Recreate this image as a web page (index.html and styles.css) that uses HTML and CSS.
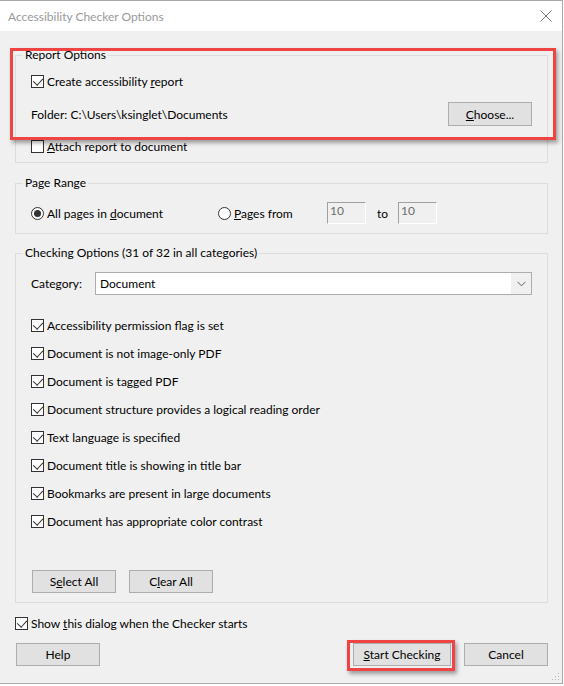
FILE: index.html
```html
<!DOCTYPE html>
<html lang="en">

<head>
    <meta charset="UTF-8">
    <meta name="viewport" content="width=device-width, initial-scale=1.0">
    <title>Accessibility Checker Options</title>
    <link rel="stylesheet" href="styles.css">
</head>

<body>
    <div class="dialog">
        <div class="titlebar">
            <span class="title">Accessibility Checker Options</span>
            <svg class="close" width="12" height="12" viewBox="0 0 12 12">
                <path d="M0.5 0.5 L11.5 11.5 M11.5 0.5 L0.5 11.5" stroke="#7a7a7a" stroke-width="1" fill="none" />
            </svg>
        </div>

        <div class="content">
            <fieldset class="group report">
                <legend>Report Options</legend>
                <label class="check"><span class="box on"></span><span>Create accessibility <u>r</u>eport</span></label>
                <div class="folder-row">
                    <span>Folder: C:\Users\ksinglet\Documents</span>
                    <button class="btn"><u>C</u>hoose...</button>
                </div>
                <label class="check"><span class="box"></span><span><u>A</u>ttach report to document</span></label>
                <div class="callout callout-report"></div>
            </fieldset>

            <fieldset class="group range">
                <legend>Page Range</legend>
                <div class="range-row">
                    <label class="radio all"><span class="dot on"></span><span>All pages in <u>d</u>ocument</span></label>
                    <label class="radio from"><span class="dot"></span><span><u>P</u>ages from</span></label>
                    <span class="field">10</span>
                    <span class="to">to</span>
                    <span class="field">10</span>
                </div>
            </fieldset>

            <fieldset class="group checking">
                <legend>Checking Options (31 of 32 in all categories)</legend>
                <div class="category-row">
                    <span class="category-label">Cate<u>g</u>ory:</span>
                    <div class="select">
                        <span>Document</span>
                        <span class="arrow">
                            <svg width="9" height="6" viewBox="0 0 9 6">
                                <path d="M0.5 0.8 L4.5 4.8 L8.5 0.8" stroke="#606060" stroke-width="1" fill="none" />
                            </svg>
                        </span>
                    </div>
                </div>
                <div class="rules">
                    <label class="check"><span class="box on"></span><span>Accessibility permission flag is set</span></label>
                    <label class="check"><span class="box on"></span><span>Document is not image-only PDF</span></label>
                    <label class="check"><span class="box on"></span><span>Document is tagged PDF</span></label>
                    <label class="check"><span class="box on"></span><span>Document structure provides a logical reading order</span></label>
                    <label class="check"><span class="box on"></span><span>Text language is specified</span></label>
                    <label class="check"><span class="box on"></span><span>Document title is showing in title bar</span></label>
                    <label class="check"><span class="box on"></span><span>Bookmarks are present in large documents</span></label>
                    <label class="check"><span class="box on"></span><span>Document has appropriate color contrast</span></label>
                </div>
                <div class="select-buttons">
                    <button class="btn">S<u>e</u>lect All</button>
                    <button class="btn">C<u>l</u>ear All</button>
                </div>
            </fieldset>

            <label class="check show"><span class="box on"></span><span>Show <u>t</u>his dialog when the Checker starts</span></label>

            <div class="footer">
                <button class="btn">Help</button>
                <div class="footer-right">
                    <button class="btn start"><u>S</u>tart Checking
                        <span class="callout callout-start"></span>
                    </button>
                    <button class="btn">Cancel</button>
                </div>
            </div>
        </div>

        <svg class="grip" width="8" height="8" viewBox="0 0 8 8">
            <rect x="6" y="0" width="1" height="1" fill="#b8b8b8" />
            <rect x="3" y="3" width="1" height="1" fill="#b8b8b8" />
            <rect x="6" y="3" width="1" height="1" fill="#b8b8b8" />
            <rect x="0" y="6" width="1" height="1" fill="#b8b8b8" />
            <rect x="3" y="6" width="1" height="1" fill="#b8b8b8" />
            <rect x="6" y="6" width="1" height="1" fill="#b8b8b8" />
        </svg>
    </div>
</body>

</html>
```

FILE: styles.css
```css
* {
    margin: 0;
    padding: 0;
    box-sizing: border-box;
}

body {
    width: 564px;
    height: 686px;
    background: #fff;
    font-family: Lato, "Noto Sans", sans-serif;
    font-size: 12px;
    color: #000;
}

.dialog {
    position: relative;
    width: 563px;
    height: 684px;
    background: #f0f0f0;
    border-top: 1px solid #a8a8a8;
    border-right: 1px solid #a8a8a8;
    border-bottom: 1px solid #a8a8a8;
}

.titlebar {
    height: 30px;
    background: #fff;
    display: flex;
    align-items: center;
    justify-content: space-between;
    padding: 0 10px 0 8px;
}

.title {
    color: #9a9a9a;
    font-size: 12px;
}

.content {
    padding: 16px 14px 0 15px;
}

/* group boxes */
.group {
    position: relative;
    border: 1px solid #dcdcdc;
    padding: 0 15px;
}

.group legend {
    margin-left: -8px;
    padding: 0 2px;
    line-height: 16px;
}

.report {
    display: flex;
    flex-direction: column;
    gap: 10px;
    padding-top: 8px;
    padding-bottom: 6px;
}

.report .folder-row {
    margin-top: 1px;
}

.range {
    margin-top: 12px;
    padding-top: 11px;
    padding-bottom: 9px;
}

.checking {
    margin-top: 11px;
    padding-top: 11px;
    padding-bottom: 9px;
}

/* checkboxes and radios */
.check,
.radio {
    display: flex;
    align-items: center;
    height: 20px;
    white-space: nowrap;
}

.box {
    width: 13px;
    height: 13px;
    border: 1px solid #333;
    background: #fff;
    margin-right: 3px;
    position: relative;
    flex: none;
}

.box.on::after {
    content: "";
    position: absolute;
    left: 3px;
    top: 0;
    width: 5px;
    height: 8px;
    border-right: 1px solid #333;
    border-bottom: 1px solid #333;
    transform: rotate(42deg);
}

.dot {
    width: 13px;
    height: 13px;
    border: 1px solid #333;
    border-radius: 50%;
    background: #fff;
    margin-right: 3px;
    position: relative;
    flex: none;
}

.dot.on::after {
    content: "";
    position: absolute;
    left: 2px;
    top: 2px;
    width: 7px;
    height: 7px;
    border-radius: 50%;
    background: #333;
}

.folder-row {
    display: flex;
    align-items: center;
    justify-content: space-between;
    height: 24px;
}

.btn {
    width: 84px;
    height: 23px;
    background: #e1e1e1;
    border: 1px solid #adadad;
    font-family: inherit;
    font-size: 12px;
    color: #000;
    position: relative;
}

.folder-row .btn {
    height: 24px;
}

/* page range */
.range-row {
    display: flex;
    align-items: center;
    height: 22px;
}

.radio.all {
    width: 187px;
}

.radio.from {
    width: 109px;
}

.field {
    width: 39px;
    height: 22px;
    background: #f0f0f0;
    border-top: 1px solid #a0a0a0;
    border-left: 1px solid #a0a0a0;
    border-right: 1px solid #fff;
    border-bottom: 1px solid #fff;
    color: #6d6d6d;
    padding-left: 2px;
    line-height: 16px;
}

.to {
    width: 32px;
    padding-left: 11px;
}

/* checking options */
.category-row {
    display: flex;
    align-items: center;
    height: 23px;
}

.category-label {
    width: 64px;
}

.select {
    flex: 1;
    height: 23px;
    background: #fff;
    border: 1px solid #adadad;
    display: flex;
    align-items: center;
    justify-content: space-between;
    padding-left: 4px;
}

.select .arrow {
    width: 20px;
    height: 21px;
    background: #f0f0f0;
    display: flex;
    align-items: center;
    justify-content: center;
}

.rules {
    display: flex;
    flex-direction: column;
    gap: 8px;
    margin-top: 20px;
}

.select-buttons {
    display: flex;
    gap: 13px;
    margin-top: 39px;
    padding-left: 1px;
}

.show {
    margin-top: 10px;
}

.footer {
    display: flex;
    justify-content: space-between;
    margin-top: 10px;
    padding-left: 1px;
}

.footer-right {
    display: flex;
    gap: 13px;
}

.btn.start {
    width: 98px;
}

/* red highlight frames from the screenshot */
.callout {
    position: absolute;
    border: 3px solid #ef4444;
    box-shadow: 2px 3px 4px rgba(0, 0, 0, 0.35);
    pointer-events: none;
}

.callout-report {
    left: -6px;
    top: -15px;
    width: 546px;
    height: 92px;
}

.callout-start {
    left: -7px;
    top: -4px;
    width: 108px;
    height: 31px;
}

.grip {
    position: absolute;
    right: 2px;
    bottom: 2px;
}
```
